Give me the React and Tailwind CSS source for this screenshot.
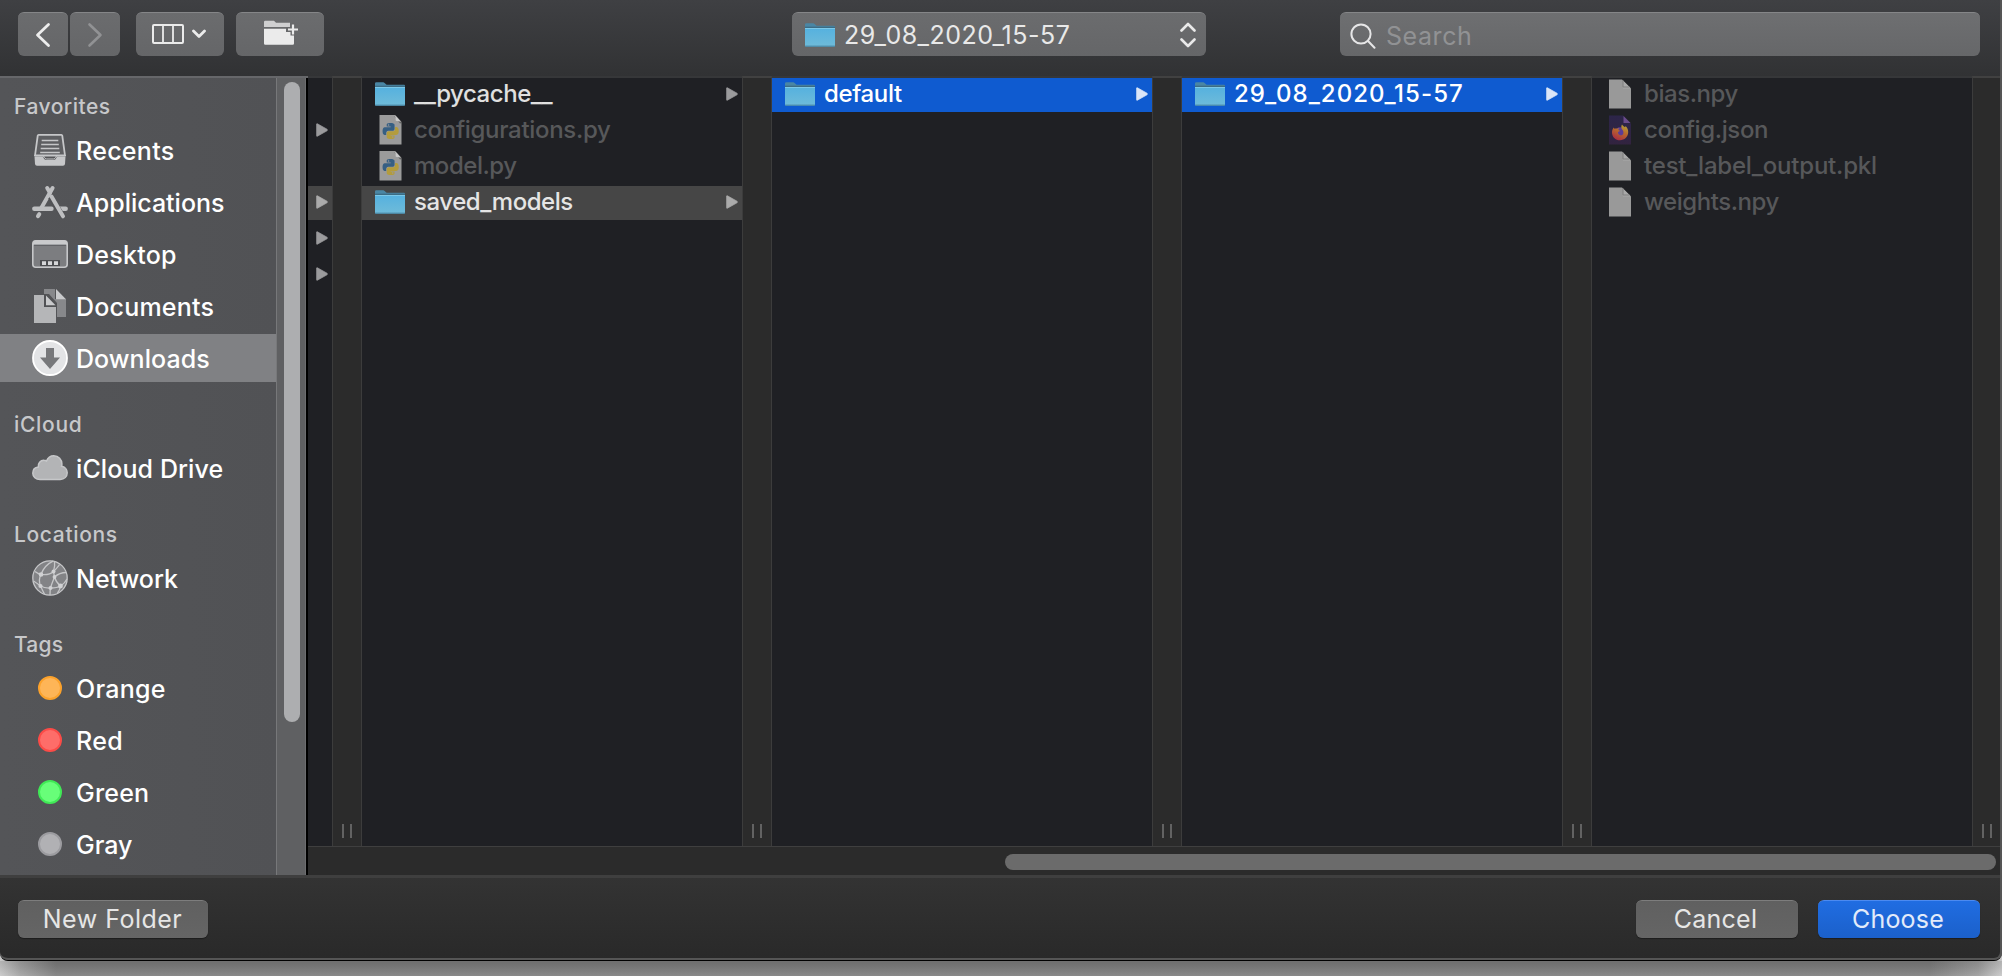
function FolderIcon() {
  return (
    <svg width="30" height="26" viewBox="0 0 30 26" className="shrink-0">
      <defs>
        <linearGradient id="folderFront" x1="0" y1="0" x2="0" y2="1">
          <stop offset="0" stopColor="#55b1df" />
          <stop offset="1" stopColor="#6fbbd9" />
        </linearGradient>
      </defs>
      <path d="M0 24V2.6Q0 1.3 1.3 1.3H8.2Q9 1.3 9.6 1.9L11 3.2Q11.5 3.7 12.4 3.7H29Q30 3.7 30 4.7V24Z" fill="#4a86a4" />
      <rect y="4.7" width="30" height="1.4" fill="#3c6c84" />
      <path d="M0 6H30V23.6Q30 24.6 29 24.6H1Q0 24.6 0 23.6Z" fill="url(#folderFront)" />
      <rect y="6" width="30" height="1" fill="#7cc8e8" />
      <rect x=".2" y="23.6" width="29.6" height="1.2" fill="#4b8ba8" />
    </svg>
  );
}

function FileIcon() {
  return (
    <svg width="22" height="30" viewBox="0 0 22 30" className="shrink-0">
      <path d="M0 .5H13L22 9.5V29.5H0Z" fill="#999999" />
      <path d="M13 .5L22 9.5H14V1.5Z" fill="#a9a9a9" />
      <path d="M14 1.5V8H20.5" fill="none" stroke="#7f7f7f" strokeWidth="1" />
    </svg>
  );
}

const snake =
  'M14.25.18l.9.2.73.26.59.3.45.32.34.34.25.34.16.33.1.3.04.26.02.2-.01.13V8.5l-.05.63-.13.55-.21.46-.26.38-.3.31-.33.25-.35.19-.35.14-.33.1-.3.07-.26.04-.21.02H8.77l-.69.05-.59.14-.5.22-.41.27-.33.32-.27.35-.2.36-.15.37-.1.35-.07.32-.04.27-.02.21v3.06H3.17l-.21-.03-.28-.07-.32-.12-.35-.18-.36-.26-.36-.36-.35-.46-.32-.59-.28-.73-.21-.88-.14-1.05-.05-1.23.06-1.22.16-1.04.24-.87.32-.71.36-.57.4-.44.42-.33.42-.24.4-.16.36-.1.32-.05.24-.01h.16l.06.01h8.16v-.83H6.18l-.01-2.75-.02-.37.05-.34.11-.31.17-.28.25-.26.31-.23.38-.2.44-.18.51-.15.58-.12.64-.1.71-.06.77-.04.84-.02 1.27.05z';

function PythonFileIcon() {
  return (
    <svg width="23" height="31" viewBox="0 0 23 31" className="shrink-0">
      <path d="M.5 1H16L22.5 8V30.5H.5Z" fill="#9b9b9b" />
      <path d="M15 2L21 9.4L22.5 9V7Z" fill="#3b3b3b" opacity=".55" />
      <path d="M16.2 1.2L22.2 7.8L16.8 6.8Z" fill="#c9c9c9" />
      <g transform="translate(3.6 9) scale(.67)">
        <path d={snake} fill="#365f83" />
        <g transform="rotate(180 12 12)">
          <path d={snake} fill="#b39c3d" />
        </g>
        <circle cx="8.9" cy="3.1" r="1.1" fill="#9b9b9b" />
        <circle cx="15.1" cy="20.9" r="1.1" fill="#9b9b9b" />
      </g>
    </svg>
  );
}

function FirefoxFileIcon() {
  return (
    <svg width="22" height="30" viewBox="0 0 22 30" className="shrink-0">
      <defs>
        <linearGradient id="foxPage" x1="0" y1="0" x2="0" y2="1">
          <stop offset="0" stopColor="#2c2549" />
          <stop offset="1" stopColor="#32233f" />
        </linearGradient>
        <linearGradient id="foxTail" x1=".8" y1="0" x2=".3" y2="1">
          <stop offset="0" stopColor="#b5a53c" />
          <stop offset=".45" stopColor="#b9692c" />
          <stop offset="1" stopColor="#a82c43" />
        </linearGradient>
      </defs>
      <path d="M0 .5H14L22 8.5V29.5H0Z" fill="url(#foxPage)" />
      <path d="M14.5 1V8H21.5Z" fill="#6a4c8c" />
      <circle cx="11" cy="17.3" r="5" fill="#5c3c96" />
      <path d="M13 9.6C14 11.2 15.3 11.6 16 12.3C16.6 11.7 16.5 11.2 16.6 11C18.6 12.8 19.3 15.3 19.2 17.3C19 22 15.5 25.2 11 25.2C6.4 25.2 3 21.8 3 17.4C3 15.5 3.6 13.6 4.9 12.4C5 13 5.2 13.5 5.5 13.8C6.3 13.4 7.5 13.4 8.3 13.7C9 13.2 9.8 13.1 10.5 13.3C9.7 13.8 9.3 14.4 9.3 15L11 15.7C10.7 16.6 9.7 16.7 9 17C8.8 18.5 9.7 20 11.3 20.3C13.3 20.6 14.6 19 14.4 17.2C14.3 15.5 13.3 14.7 12.7 13.8C12.1 12.7 12.2 11 13 9.6Z" fill="url(#foxTail)" />
    </svg>
  );
}

function RecentsIcon() {
  return (
    <svg width="36" height="36" viewBox="0 0 36 36">
      <path d="M6.6 2.9H29.4Q30.1 2.9 30.3 3.8L33 23.5H3L5.7 3.8Q5.900 2.9 6.600 2.900Z" fill="#5e5f62" stroke="#c6c7c9" strokeWidth="1.8" strokeLinejoin="round" />
      <path d="M2.500 24.500H10.500C11.500 24.500 11.700 28 14.500 28H21.500C24.300 28 24.500 24.500 25.500 24.500H33.500L33 32Q32.800 33.800 31 33.800H5Q3.200 33.800 3 32Z" fill="#c6c7c9" />
      <path d="M2.100 23.500H10.800C12 23.500 12.200 27 14.500 27H21.500C23.800 27 24 23.500 25.200 23.500H33.900" fill="none" stroke="#c6c7c9" strokeWidth="1" />
      <path d="M9.700 8.500H26.300M9.200 12.500H26.800M8.700 16.500H27.300M8.200 20.500H27.800" stroke="#c6c7c9" strokeWidth="1.500" />
    </svg>
  );
}

function ApplicationsIcon() {
  return (
    <svg width="36" height="36" viewBox="0 0 36 36" fill="none" stroke="#bebfc1" strokeLinecap="round">
      <path d="M2.3 24.8H19.5M28 24.8H33.7" strokeWidth="4.4" />
      <path d="M20.6 4L9.3 24" strokeWidth="4" />
      <path d="M7.3 30.2L6 32.2" strokeWidth="4" />
      <path d="M15.2 4L18 8.8" strokeWidth="4" />
      <path d="M18.5 13L30.8 32.2" stroke="#515255" strokeWidth="5.5" strokeLinecap="butt" />
      <path d="M19.5 12.5L31 32.3" strokeWidth="4" />
    </svg>
  );
}

function DesktopIcon() {
  return (
    <svg width="36" height="36" viewBox="0 0 36 36">
      <rect x=".8" y="4.800" width="34.400" height="26.400" rx="3" fill="#7c7d80" stroke="#c6c7c9" strokeWidth="1.600" />
      <path d="M1 8V7Q1 4.500 3.500 4.500H32.500Q35 4.500 35 7V8.800H1Z" fill="#c9cacc" />
      <rect x="2" y="8.800" width="32" height="1" fill="#5d5e61" />
      <rect x="8" y="24" width="20" height="6" fill="#4c4d50" />
      <path d="M10 25.200H14V29H10ZM16 25.200H20V29H16ZM22 25.200H26V29H22Z" fill="#d5d6d8" />
    </svg>
  );
}

function DocumentsIcon() {
  return (
    <svg width="36" height="36" viewBox="0 0 36 36">
      <path d="M12 1H23V11H34V29H25V15L17 6H12Z" fill="#87888b" />
      <path d="M24 1L34 11.200H24Z" fill="#c9cacc" />
      <path d="M2 7H12V19H24V35H2Z" fill="#b5b6b8" />
      <path d="M12 6V19H25V16.500L14.500 6Z" fill="#515255" />
      <path d="M14 7.500L23.500 17.300H14Z" fill="#c9cacc" />
    </svg>
  );
}

function DownloadsIcon() {
  return (
    <svg width="36" height="36" viewBox="0 0 36 36">
      <circle cx="18" cy="18" r="17" fill="#e3e4e6" stroke="#ffffff" strokeWidth="1.800" />
      <path d="M14 8H22V17.500H28L18 29L8 17.500H14Z" fill="#77787b" />
    </svg>
  );
}

function CloudIcon() {
  return (
    <svg width="36" height="36" viewBox="0 0 36 36">
      <path d="M8 29.400C3.800 29.400 .8 26.900 .8 23.300C.8 20 3 17.500 6.300 17.100C5.700 13.300 8.500 10.100 12 10.300C13 10.300 13.800 10.600 14.500 11C15.800 7.800 18.500 5.800 21.800 5.800C26.500 5.800 30 9.500 29.900 14.100C29.900 14.800 29.800 15.600 29.600 16.300C32.900 16.800 35.200 19.500 35.200 22.800C35.200 26.700 32.300 29.400 28.200 29.400Z" fill="#b3b4b6" stroke="#c6c7c9" strokeWidth="1.500" />
    </svg>
  );
}

function NetworkIcon() {
  return (
    <svg width="36" height="36" viewBox="0 0 36 36" fill="none" stroke="#c6c7c9" strokeWidth="1.300">
      <circle cx="18" cy="18" r="17.200" fill="#828386" />
      <path d="M3 11.500C5 13 7 14 9 14.500C14 15 19 14 21.500 11.500C24 9 26 7 27.500 4.500" />
      <path d="M9 14.500C11 9 15 4 21 1.200M9 14.500C7 18 7 22 8.500 26C10 29 11 32 12.500 34" />
      <path d="M21.500 11.500C22.500 8 23 4.500 22.500 1.500M21.500 11.500L22.500 17C26 14 30 12.500 34 12.500M22.500 17C21 21 19.500 24 18.500 28C18 30.500 18 33 18 35" />
      <path d="M8.500 26C12 28 15 28.200 18.500 28C23 28 26 27.500 28.500 26C31 24.500 33.500 22 35 19M28.500 26C25.500 23.500 23.500 20.500 22.500 17M1.500 21C4 22.500 6.500 24.500 8.500 26M28.500 26C28 29 27 31 25.500 33" />
      <g fill="#d0d1d3" stroke="none">
        <circle cx="9" cy="14.500" r="2.300" />
        <circle cx="21.500" cy="11.500" r="2" />
        <circle cx="22.500" cy="17" r="1.900" />
        <circle cx="8.500" cy="26" r="2.100" />
        <circle cx="18.500" cy="28" r="2" />
        <circle cx="28.500" cy="26" r="2.400" />
      </g>
    </svg>
  );
}

const Dot = ({ color }) => <span className={`size-6 rounded-full border-2 ${color}`} />;

function SideHeader({ children, tracking }) {
  return (
    <div className={`flex h-[58px] items-end pb-[3px] pl-3.5 text-[21px] leading-7 font-medium text-[#c7c8ca] ${tracking}`}>
      <span>{children}</span>
    </div>
  );
}

function SideItem({ icon, label, tracking = '', active = false }) {
  return (
    <div className="flex h-[52px] items-center">
      <div className={`flex h-12 w-full items-center pl-8 ${active ? 'bg-[#808184]' : ''}`}>
        <span className="flex w-9 justify-center">{icon}</span>
        <span className={`ml-2 pt-0.5 text-[25px] leading-8 font-medium whitespace-nowrap text-white ${tracking}`}>{label}</span>
      </div>
    </div>
  );
}

function Sidebar() {
  return (
    <aside className="flex w-[308px] shrink-0 border-t-2 border-[#66676a] bg-[#515255]">
      <nav className="w-[276px] overflow-hidden bg-gradient-to-r from-[#545558] to-[#515255]">
        <div className="-mt-3">
          <SideHeader tracking="tracking-[0.5px]">Favorites</SideHeader>
          <SideItem icon={<RecentsIcon />} label="Recents" tracking="tracking-[0.3px]" />
          <SideItem icon={<ApplicationsIcon />} label="Applications" />
          <SideItem icon={<DesktopIcon />} label="Desktop" tracking="tracking-[0.25px]" />
          <SideItem icon={<DocumentsIcon />} label="Documents" tracking="tracking-[0.2px]" />
          <SideItem icon={<DownloadsIcon />} label="Downloads" tracking="tracking-[0.05px]" active />
          <SideHeader tracking="tracking-[0.7px]">iCloud</SideHeader>
          <SideItem icon={<CloudIcon />} label="iCloud Drive" tracking="tracking-[0.1px]" />
          <SideHeader tracking="tracking-[0.65px]">Locations</SideHeader>
          <SideItem icon={<NetworkIcon />} label="Network" />
          <SideHeader tracking="tracking-[0.2px]">Tags</SideHeader>
          <SideItem icon={<Dot color="border-[#fca22b] bg-[#feb557]" />} label="Orange" tracking="tracking-[0.25px]" />
          <SideItem icon={<Dot color="border-[#fb4b47] bg-[#fe6d69]" />} label="Red" tracking="tracking-[0.4px]" />
          <SideItem icon={<Dot color="border-[#40e956] bg-[#68fe79]" />} label="Green" tracking="tracking-[0.2px]" />
          <SideItem icon={<Dot color="border-[#9c9ca0] bg-[#b1b1b4]" />} label="Gray" />
        </div>
      </nav>
      <div className="w-[30px] border-x border-l-[#77787a] border-r-[#6c6d6f] bg-[#5f6062] pt-1">
        <div className="ml-[7px] h-[640px] w-4 rounded-full bg-[#adaeb0]" />
      </div>
      <div className="w-0.5 bg-black" />
    </aside>
  );
}

function Arrow({ color }) {
  return (
    <svg width="12" height="14" viewBox="0 0 12 14" className={`shrink-0 ${color}`}>
      <path d="M.6 1.200Q.6 .4 1.400 .8L11 6.200Q12 7 11 7.800L1.400 13.200Q.6 13.600 .6 12.800Z" fill="currentColor" stroke="currentColor" strokeWidth=".7" />
    </svg>
  );
}

function Row({ icon, label, tone = 'plain', arrow = false, tracking = 'tracking-[-0.45px]' }) {
  const row = { plain: '', open: 'bg-[#464646]', selected: 'bg-[#0f5bd0]', dim: '' }[tone];
  const text = { plain: 'text-[#e0e0e0]', open: 'text-[#e5e5e5]', selected: 'text-white', dim: 'text-[#57585a]' }[tone];
  const tip = { plain: 'text-[#9b9b9d]', open: 'text-[#ababab]', selected: 'text-[#dbe6f8]', dim: '' }[tone];
  return (
    <div className={`mb-0.5 flex h-[34px] items-center pr-1 pb-[3px] pl-[13px] ${row}`}>
      <span className="flex w-[30px] shrink-0 justify-center">{icon}</span>
      <span className={`ml-[9px] flex-1 text-[24px] leading-[30px] font-medium whitespace-nowrap ${text} ${tracking}`}>{label}</span>
      {arrow && <Arrow color={tip} />}
    </div>
  );
}

const Column = ({ children }) => <div className="w-[380px] shrink-0 border-t-2 border-[#363739] bg-[#1f2024]">{children}</div>;

function Divider() {
  return (
    <div className="flex w-[30px] shrink-0 items-end justify-center gap-1.5 border-x border-t-2 border-x-[#3c3c3c] border-t-[#414141] bg-[#2b2b2b] pb-2">
      <span className="h-3.5 w-0.5 bg-[#626262]" />
      <span className="h-3.5 w-0.5 bg-[#626262]" />
    </div>
  );
}

function Stub({ arrow, open }) {
  return (
    <div className={`mb-0.5 flex h-[34px] items-center pb-0.5 pl-2 ${open ? 'bg-[#464646]' : ''}`}>
      {arrow && <Arrow color={open ? 'text-[#ababab]' : 'text-[#9b9b9d]'} />}
    </div>
  );
}

function Browser() {
  return (
    <main className="flex min-w-0 flex-1 flex-col overflow-hidden bg-[#2b2b2b]">
      <div className="flex h-[770px] shrink-0 overflow-hidden">
        <div className="w-6 shrink-0 border-t-2 border-[#363739] bg-[#1f2024]">
          <Stub />
          <Stub arrow />
          <Stub />
          <Stub arrow open />
          <Stub arrow />
          <Stub arrow />
        </div>
        <Divider />
        <Column>
          <Row icon={<FolderIcon />} label="__pycache__" arrow />
          <Row icon={<PythonFileIcon />} label="configurations.py" tone="dim" tracking="tracking-[-0.3px]" />
          <Row icon={<PythonFileIcon />} label="model.py" tone="dim" />
          <Row icon={<FolderIcon />} label="saved_models" tone="open" arrow />
        </Column>
        <Divider />
        <Column>
          <Row icon={<FolderIcon />} label="default" tone="selected" arrow tracking="tracking-[-0.35px]" />
        </Column>
        <Divider />
        <Column>
          <Row icon={<FolderIcon />} label="29_08_2020_15-57" tone="selected" arrow tracking="tracking-[1.05px]" />
        </Column>
        <Divider />
        <Column>
          <Row icon={<FileIcon />} label="bias.npy" tone="dim" />
          <Row icon={<FirefoxFileIcon />} label="config.json" tone="dim" tracking="tracking-[-0.36px]" />
          <Row icon={<FileIcon />} label="test_label_output.pkl" tone="dim" tracking="tracking-[-0.2px]" />
          <Row icon={<FileIcon />} label="weights.npy" tone="dim" tracking="tracking-[-0.45px]" />
        </Column>
        <Divider />
      </div>
      <div className="flex h-[29px] shrink-0 items-start justify-end border-t border-[#3f3f3f] pt-[7px] pr-1">
        <div className="h-4 w-[991px] rounded-full bg-[#6b6b6b]" />
      </div>
    </main>
  );
}

const toolButton =
  'flex h-11 items-center justify-center rounded-md border-t border-[#858688] bg-gradient-to-b from-[#6b6c6e] to-[#656668]';

function Toolbar() {
  return (
    <header className="flex h-[76px] shrink-0 items-start bg-gradient-to-b from-[#3f4043] to-[#313234] pt-3 pr-5 pl-[18px]">
      <button className={`${toolButton} w-[50px]`}>
        <svg width="16" height="26" viewBox="0 0 16 26" fill="none" stroke="#ededed" strokeWidth="2.8" strokeLinecap="round" strokeLinejoin="round">
          <path d="M13.5 2.5L2.5 13L13.5 23.5" />
        </svg>
      </button>
      <button className={`${toolButton} ml-0.5 w-[50px]`}>
        <svg width="16" height="26" viewBox="0 0 16 26" fill="none" stroke="#919294" strokeWidth="2.6" strokeLinecap="round" strokeLinejoin="round">
          <path d="M2.5 2.5L13.5 13L2.5 23.5" />
        </svg>
      </button>
      <button className={`${toolButton} ml-4 w-[88px] gap-2 pr-0.5 pb-px`}>
        <svg width="32" height="20" viewBox="0 0 32 20" fill="none" stroke="#ebebeb" strokeWidth="2">
          <rect x="1" y="1" width="30" height="18" rx="1" />
          <path d="M11 1V19M21 1V19" strokeWidth="1.8" />
        </svg>
        <svg width="14" height="10" viewBox="0 0 14 10" fill="none" stroke="#ebebeb" strokeWidth="2.8" strokeLinecap="round" strokeLinejoin="round">
          <path d="M1.5 2L7 7.5L12.5 2" />
        </svg>
      </button>
      <button className={`${toolButton} ml-3 w-[88px] pb-1 pl-0.5`}>
        <svg width="34" height="26" viewBox="0 0 34 26">
          <path d="M0 6V2Q0 .8 1.2 .8H10L12 2.8H26V7H0Z" fill="#cfcfd0" />
          <path d="M0 8.7H22V12H28V14.5H30V23.5Q30 24.8 28.7 24.8H1.3Q0 24.8 0 23.5Z" fill="#ebebeb" />
          <path d="M29 3.5V15.5M23 9.5H35" stroke="#68696b" strokeWidth="5" />
          <path d="M29 4.5V14.5M24 9.5H34" stroke="#ebebeb" strokeWidth="2.2" />
        </svg>
      </button>
      <button className={`${toolButton} ml-[468px] w-[414px] pr-2.5 pl-[13px]`}>
        <FolderIcon />
        <span className="ml-[9px] flex-1 pt-px text-left text-[25px] leading-8 tracking-[0.5px] whitespace-nowrap text-[#e9e9e9]">29_08_2020_15-57</span>
        <svg width="16" height="26" viewBox="0 0 16 26" fill="none" stroke="#e9e9e9" strokeWidth="2.6" strokeLinecap="round" strokeLinejoin="round">
          <path d="M1.5 8.5L8 2L14.5 8.5M1.5 17.5L8 24L14.5 17.5" />
        </svg>
      </button>
      <div className="ml-auto flex h-11 w-[640px] items-center rounded-md border-t border-[#858688] bg-gradient-to-b from-[#6e6f71] to-[#666769] pt-0.5 pl-2.5">
        <svg width="26" height="26" viewBox="0 0 26 26" fill="none" stroke="#e6e6e7" strokeWidth="2" strokeLinecap="round">
          <circle cx="11" cy="11" r="9.6" />
          <path d="M18 18L24.5 24.8" />
        </svg>
        <span className="ml-2.5 text-[25px] leading-8 tracking-[0.56px] text-[#919294]">Search</span>
      </div>
    </header>
  );
}

const footButton = 'h-[38px] rounded-md border-t text-[25px] leading-[37px] shadow-[0_1px_1px_rgba(0,0,0,0.35)]';

function Footer() {
  return (
    <footer className="flex h-[85px] shrink-0 items-start border-t-[3px] border-[#3f3f3f] bg-gradient-to-b from-[#333333] to-[#292929] pt-[22px] pr-5 pl-[18px]">
      <button className={`${footButton} w-[190px] border-[#7d7d7d] bg-gradient-to-b from-[#606060] to-[#656565] pr-px tracking-[0.5px] text-[#e6e6e6]`}>New Folder</button>
      <button className={`${footButton} ml-auto w-[162px] border-[#7d7d7d] bg-gradient-to-b from-[#606060] to-[#656565] pr-[3px] tracking-[0.25px] text-[#e6e6e6]`}>Cancel</button>
      <button className={`${footButton} ml-5 w-[162px] border-[#4c8af0] bg-gradient-to-b from-[#206de2] to-[#1b60ca] pr-0.5 tracking-[0.16px] text-[#e2ebfa]`}>Choose</button>
    </footer>
  );
}

export default function App() {
  return (
    <div className="flex h-[976px] w-[2002px] flex-col overflow-hidden bg-[linear-gradient(90deg,#c8c8c8_0px,#a2a2a2_20px,#7c7c7c_56px,#7c7c7c_1930px,#9a9a9a_1978px,#c8c8c8_2002px)] font-['Inter',sans-serif] select-none">
      <div className="flex h-[961px] flex-col overflow-hidden rounded-b-lg border-b border-black bg-[#555555]">
        <div className="flex h-[960px] flex-col overflow-hidden rounded-b-lg border-r-2 border-b-2 border-[#555555]">
          <Toolbar />
          <div className="flex h-[799px] shrink-0 overflow-hidden">
            <Sidebar />
            <Browser />
          </div>
          <Footer />
        </div>
      </div>
      <div className="flex-1 bg-gradient-to-b from-black/10 to-white/10" />
    </div>
  );
}
